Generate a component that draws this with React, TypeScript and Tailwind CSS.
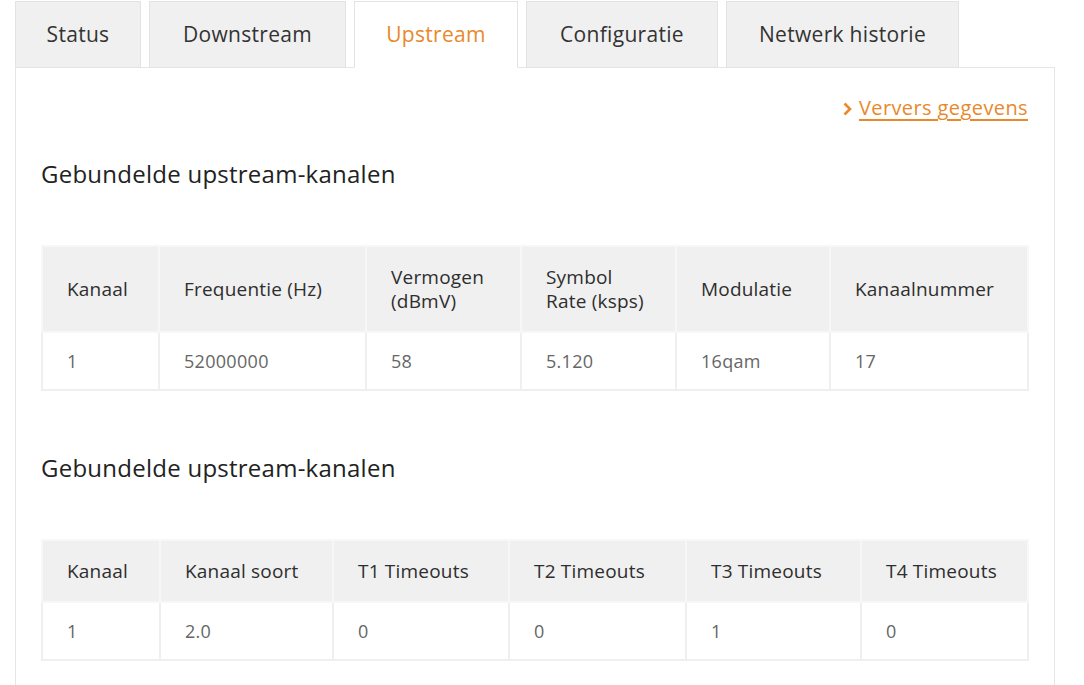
import React from "react";

const tabs = [
  { label: "Status", w: "w-[126px]" },
  { label: "Downstream", w: "w-[197px]" },
  { label: "Upstream", w: "w-[164px]", active: true },
  { label: "Configuratie", w: "w-[192px]" },
  { label: "Netwerk historie", w: "w-[233px]" },
];

type Col = { w: string; head: React.ReactNode; val: string };

const table1: Col[] = [
  { w: "w-[117px]", head: "Kanaal", val: "1" },
  { w: "w-[207px]", head: "Frequentie (Hz)", val: "52000000" },
  { w: "w-[155px]", head: (<>Vermogen<br />(dBmV)</>), val: "58" },
  { w: "w-[155px]", head: (<>Symbol<br />Rate (ksps)</>), val: "5.120" },
  { w: "w-[154px]", head: "Modulatie", val: "16qam" },
  { w: "w-[198px]", head: "Kanaalnummer", val: "17" },
];

const table2: Col[] = [
  { w: "w-[118px]", head: "Kanaal", val: "1" },
  { w: "w-[173px]", head: "Kanaal soort", val: "2.0" },
  { w: "w-[176px]", head: "T1 Timeouts", val: "0" },
  { w: "w-[177px]", head: "T2 Timeouts", val: "0" },
  { w: "w-[175px]", head: "T3 Timeouts", val: "1" },
  { w: "w-[167px]", head: "T4 Timeouts", val: "0" },
];

function DataTable({ cols, headH }: { cols: Col[]; headH: string }) {
  return (
    <table className="table-fixed w-[986px] border-collapse">
      <colgroup>
        {cols.map((c, i) => (
          <col key={i} className={c.w} />
        ))}
      </colgroup>
      <thead>
        <tr className={headH}>
          {cols.map((c, i) => (
            <th
              key={i}
              className="bg-[#f0f0f0] border-2 border-[#f7f7f7] text-left font-normal text-[19px] tracking-[0.2px] leading-[24px] text-[#2e2e2e] pl-[24px] pr-2 align-middle"
            >
              {c.head}
            </th>
          ))}
        </tr>
      </thead>
      <tbody>
        <tr className="h-[58px]">
          {cols.map((c, i) => (
            <td
              key={i}
              className="bg-white border-2 border-[#efefef] text-left text-[18px] tracking-[0.3px] text-[#666] pl-[24px] align-middle"
            >
              {c.val}
            </td>
          ))}
        </tr>
      </tbody>
    </table>
  );
}

export default function App() {
  return (
    <div
      className="w-[1084px] h-[685px] bg-white overflow-hidden pl-[15px] pt-[1px]"
      style={{ fontFamily: '"Open Sans", "Liberation Sans", sans-serif' }}
    >
      <div className="flex gap-[8px] h-[67px] relative z-10">
        {tabs.map((t) => (
          <div
            key={t.label}
            className={`${t.w} h-[67px] flex items-center justify-center text-[21px] tracking-[0.3px] border border-[#e3e3e3] ${
              t.active
                ? "bg-white text-[#e8892b] border-b-white"
                : "bg-[#f0f0f0] text-[#333] h-[66px]"
            }`}
          >
            {t.label}
          </div>
        ))}
      </div>
      <div className="w-[1040px] h-[700px] border border-[#e6e6e6] -mt-[1px] px-[25px] pt-[25px]">
        <div className="flex justify-end pr-[1px]">
          <a className="flex items-center gap-[7px] text-[20px] tracking-[0.4px] text-[#e8892b] underline underline-offset-[4px] cursor-pointer">
            <svg width="9" height="14" viewBox="0 0 9 14" className="mt-[1px]">
              <path d="M1.5 1.5 L7 7 L1.5 12.5" fill="none" stroke="#e8892b" strokeWidth="2.6" />
            </svg>
            Ververs gegevens
          </a>
        </div>
        <h2 className="text-[24px] tracking-[0.25px] text-[#222] leading-[30px] mt-[36px]">
          Gebundelde upstream-kanalen
        </h2>
        <div className="mt-[56px]">
          <DataTable cols={table1} headH="h-[86px]" />
        </div>
        <h2 className="text-[24px] tracking-[0.25px] text-[#222] leading-[30px] mt-[62px]">
          Gebundelde upstream-kanalen
        </h2>
        <div className="mt-[56px]">
          <DataTable cols={table2} headH="h-[62px]" />
        </div>
      </div>
    </div>
  );
}
